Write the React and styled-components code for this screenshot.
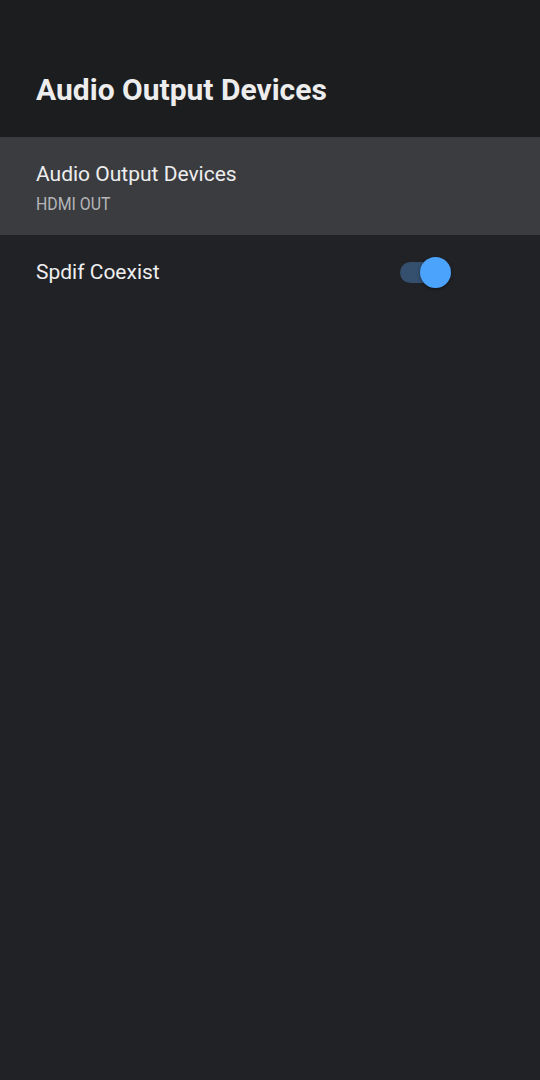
import React from "react";
import styled, { createGlobalStyle } from "styled-components";

const Global = createGlobalStyle`
  html, body { margin: 0; padding: 0; background: #212226; }
  body { font-family: Roboto, "Noto Sans", sans-serif; }
`;

const Page = styled.div`
  width: 540px;
  height: 1080px;
  background: #212226;
  display: flex;
  flex-direction: column;
`;

const Header = styled.header`
  height: 137px;
  background: #1c1d1f;
  box-sizing: border-box;
  padding: 71px 36px 0;
`;

const Title = styled.h1`
  margin: 0;
  font-size: 30px;
  line-height: 38px;
  font-weight: 700;
  color: #ededed;
`;

const List = styled.div`
  display: flex;
  flex-direction: column;
`;

const Row = styled.div`
  box-sizing: border-box;
  height: ${(p) => p.$h}px;
  padding: 0 36px;
  background: ${(p) => (p.$focused ? "#3b3c40" : "transparent")};
  display: flex;
  align-items: center;
  justify-content: space-between;
`;

const TextCol = styled.div`
  display: flex;
  flex-direction: column;
  align-items: flex-start;
  gap: 6px;
  padding-top: 4px;
`;

const ItemTitle = styled.div`
  font-size: 21px;
  line-height: 26px;
  color: #eeeeee;
`;

const ItemSub = styled.div`
  font-size: 18px;
  line-height: 22px;
  color: #b5b6b8;
  transform: scaleX(0.88);
  transform-origin: left center;
`;

const Switch = styled.div`
  position: relative;
  width: 51px;
  height: 31px;
  margin-right: 53px;
`;

const Track = styled.div`
  position: absolute;
  left: 0;
  top: 5px;
  width: 46px;
  height: 21px;
  border-radius: 10.5px;
  background: #34506e;
`;

const Thumb = styled.div`
  position: absolute;
  right: 0;
  top: 0;
  width: 31px;
  height: 31px;
  border-radius: 50%;
  background: #4ba3fb;
  box-shadow: 0 1px 3px rgba(0, 0, 0, 0.5);
`;

export default function App() {
  return (
    <Page>
      <Global />
      <Header>
        <Title>Audio Output Devices</Title>
      </Header>
      <List>
        <Row $focused $h={98}>
          <TextCol>
            <ItemTitle>Audio Output Devices</ItemTitle>
            <ItemSub>HDMI OUT</ItemSub>
          </TextCol>
        </Row>
        <Row $h={74}>
          <ItemTitle>Spdif Coexist</ItemTitle>
          <Switch>
            <Track />
            <Thumb />
          </Switch>
        </Row>
      </List>
    </Page>
  );
}
